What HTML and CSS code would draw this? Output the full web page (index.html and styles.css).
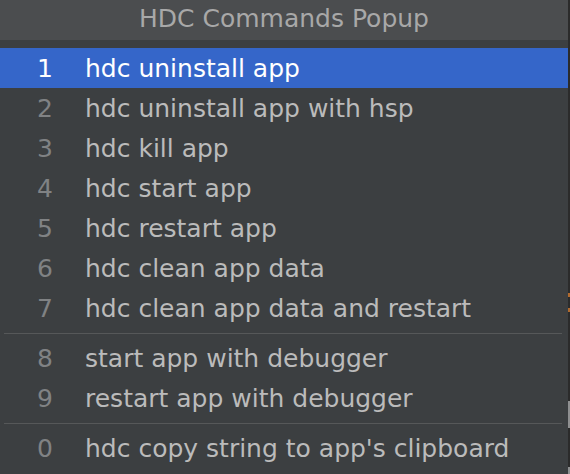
FILE: index.html
```html
<!DOCTYPE html>
<html lang="en">
<head>
  <meta charset="UTF-8">
  <title>HDC Commands Popup</title>
  <link rel="stylesheet" href="styles.css">
</head>
<body>
  <div class="screen">
    <div class="popup">
      <div class="popup-title">HDC Commands Popup</div>
      <div class="popup-list">
        <div class="item selected"><span class="num">1</span><span class="label">hdc uninstall app</span></div>
        <div class="item"><span class="num">2</span><span class="label">hdc uninstall app with hsp</span></div>
        <div class="item"><span class="num">3</span><span class="label">hdc kill app</span></div>
        <div class="item"><span class="num">4</span><span class="label">hdc start app</span></div>
        <div class="item"><span class="num">5</span><span class="label">hdc restart app</span></div>
        <div class="item"><span class="num">6</span><span class="label">hdc clean app data</span></div>
        <div class="item"><span class="num">7</span><span class="label">hdc clean app data and restart</span></div>
        <div class="separator"></div>
        <div class="item"><span class="num">8</span><span class="label">start app with debugger</span></div>
        <div class="item"><span class="num">9</span><span class="label">restart app with debugger</span></div>
        <div class="separator"></div>
        <div class="item"><span class="num">0</span><span class="label">hdc copy string to app's clipboard</span></div>
      </div>
    </div>
    <div class="editor-edge">
      <span class="mark orange m1"></span>
      <span class="mark orange m2"></span>
      <span class="mark grey m3"></span>
      <span class="mark grey m4"></span>
    </div>
  </div>
</body>
</html>
```

FILE: styles.css
```css
body {
  margin: 0;
  background: #3c3f41;
  font-family: "DejaVu Sans", "Open Sans", sans-serif;
}

.screen {
  display: flex;
  width: 570px;
  height: 474px;
  overflow: hidden;
}

.popup {
  width: 568px;
  background: #3c3f41;
}

.popup-title {
  height: 40px;
  line-height: 38px;
  background: #4b4d4f;
  color: #a8a8a8;
  font-size: 25px;
  text-align: center;
}

.popup-list {
  padding-top: 8px;
}

.item {
  display: flex;
  align-items: center;
  height: 40px;
  color: #bbbbbb;
  font-size: 25px;
}

.item .num {
  width: 53px;
  text-align: right;
  color: #808284;
}

.item .label {
  margin-left: 32px;
}

.item.selected {
  background: #3566c9;
  color: #ffffff;
}

.item.selected .num {
  color: #ffffff;
}

.separator {
  height: 1px;
  margin: 5px 6px 4px 4px;
  background: #565859;
}

.editor-edge {
  position: relative;
  width: 2px;
  background: #2b2b2b;
}

.mark {
  position: absolute;
  left: 0;
  width: 2px;
}

.orange { background: #b06a2e; }
.grey { background: #8e8f90; }

.m1 { top: 293px; height: 4px; }
.m2 { top: 308px; height: 4px; }
.m3 { top: 401px; height: 27px; }
.m4 { top: 467px; height: 7px; }
```
